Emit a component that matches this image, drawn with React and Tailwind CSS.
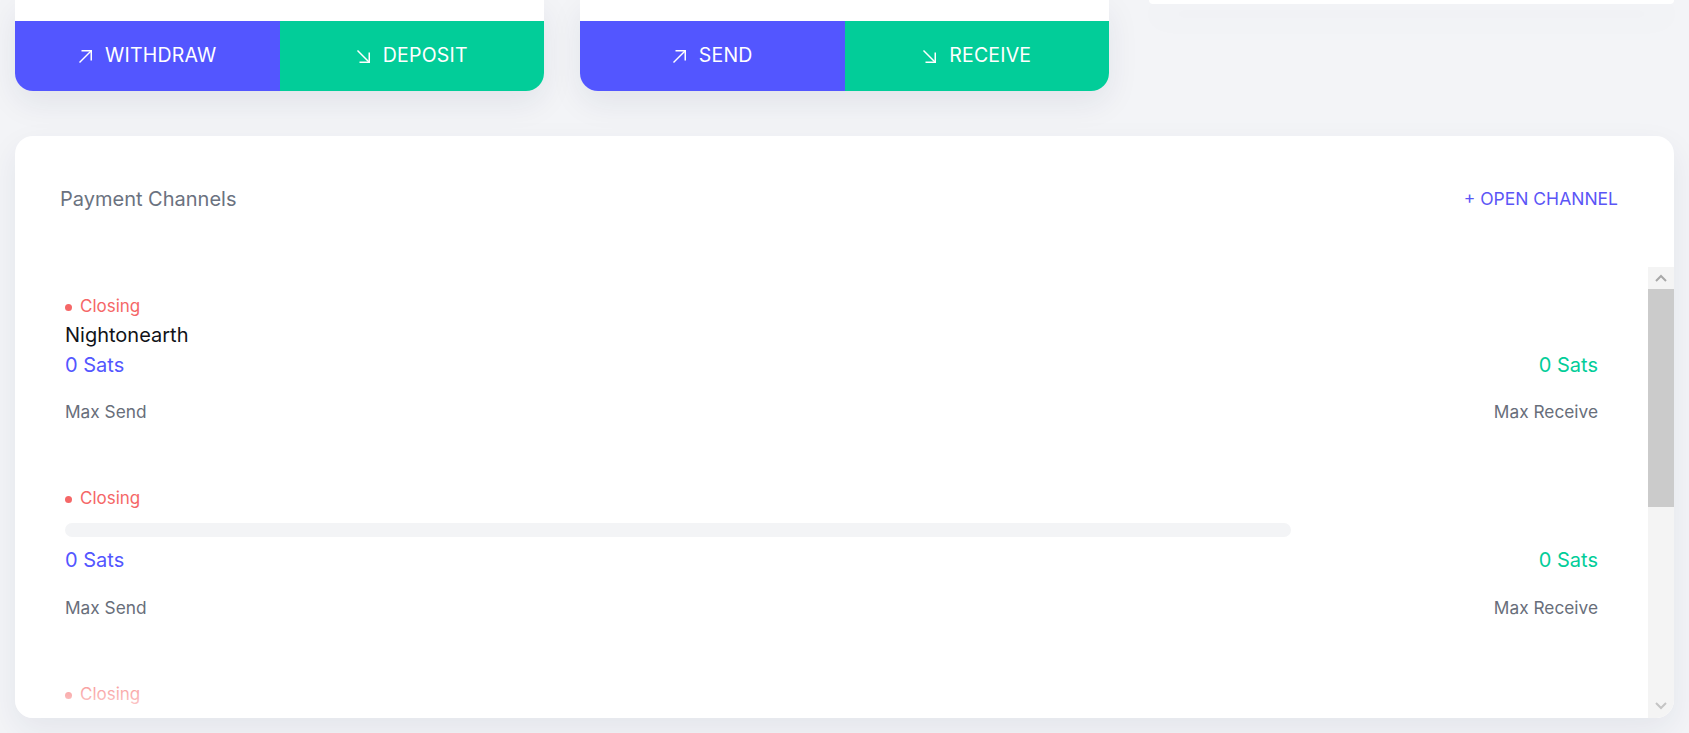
import React from 'react'

const UpRight = () => (
  <svg width="15" height="15" viewBox="0 0 15 15" fill="none" stroke="currentColor" strokeWidth="1.5">
    <path d="M1.5 13.5 13 2" />
    <path d="M3.5 1.75h9.75v9.75" />
  </svg>
)

const DownRight = () => (
  <svg width="15" height="15" viewBox="0 0 15 15" fill="none" stroke="currentColor" strokeWidth="1.5">
    <path d="M1.5 1.5 13 13" />
    <path d="M13.25 3.5v9.75H3.5" />
  </svg>
)

const ActionCard = ({ left, right }) => {
  return (
    <div className="overflow-hidden rounded-b-[18px] bg-white shadow-[0_12px_32px_rgba(30,41,80,0.08)]">
      <div className="h-[21px]" />
      <div className="flex h-[70px] text-white">
        <button className="flex flex-1 items-center justify-center gap-[12px] bg-[#5356ff] text-[19.5px] tracking-[0.01em]">
          <UpRight />
          {left}
        </button>
        <button className="flex flex-1 items-center justify-center gap-[12px] bg-[#02cd99] text-[19.5px] tracking-[0.01em]">
          <DownRight />
          {right}
        </button>
      </div>
    </div>
  )
}

const Channel = ({ name }) => {
  return (
    <div className="mb-[63px]">
      <div className="flex h-[24px] items-center gap-[8px] text-[17px] text-[#f56767]">
        <span className="h-[7px] w-[7px] rounded-full bg-[#f56767]" />
        Closing
      </div>
      {name ? (
        <p className="text-[20px] leading-[32px] text-[#111318]">{name}</p>
      ) : (
        <div className="mt-[12px] mb-[9px] h-[14px] w-[80%] rounded-full bg-[#f3f4f6]" />
      )}
      <div className="flex justify-between text-[20px] leading-[28px]">
        <span className="text-[#5356ff]">0 Sats</span>
        <span className="text-[#02cd99]">0 Sats</span>
      </div>
      <div className={`flex justify-between text-[17.3px] leading-[24px] text-[#686e7a] ${name ? 'mt-[21px]' : 'mt-[22px]'}`}>
        <span>Max Send</span>
        <span>Max Receive</span>
      </div>
    </div>
  )
}

export default function App() {
  return (
    <main className="h-[733px] overflow-hidden bg-[#f3f4f7] px-[15px] font-['Inter',sans-serif] antialiased">
      <div className="grid grid-cols-3 gap-x-[36px]">
        <ActionCard left="WITHDRAW" right="DEPOSIT" />
        <ActionCard left="SEND" right="RECEIVE" />
        <div className="ml-[4px] h-[4px] self-start rounded-b-[18px] bg-white shadow-[0_12px_32px_rgba(30,41,80,0.08)]" />
      </div>

      <section className="mt-[45px] flex h-[582px] flex-col overflow-hidden rounded-[18px] bg-white shadow-[0_12px_32px_rgba(30,41,80,0.07)]">
        <header className="flex h-[131px] shrink-0 items-start justify-between pt-[49px] pl-[45px] pr-[56px]">
          <h2 className="text-[20px] leading-[28px] text-[#6b7280]">Payment Channels</h2>
          <button className="text-[17.5px] leading-[28px] text-[#5b55f6]">+ OPEN CHANNEL</button>
        </header>

        <div className="flex min-h-0 flex-1">
          <div className="relative flex-1 overflow-hidden px-[50px] pt-[28px]">
            <Channel name="Nightonearth" />
            <Channel />
            <Channel />
            <div className="pointer-events-none absolute inset-x-0 bottom-0 h-[60px] bg-gradient-to-b from-white/0 to-white/80" />
          </div>

          {/* fake scrollbar */}
          <div className="flex w-[26px] flex-col bg-[#f4f4f4]">
            <div className="flex h-[22px] items-center justify-center">
              <svg width="12" height="8" viewBox="0 0 12 8">
                <path d="M1 7 6 2l5 5" fill="none" stroke="#a8a8a8" strokeWidth="2" />
              </svg>
            </div>
            <div className="h-[218px] bg-[#cbcbcb]" />
            <div className="flex-1" />
            <div className="flex h-[24px] items-center justify-center">
              <svg width="12" height="8" viewBox="0 0 12 8">
                <path d="M1 1l5 5 5-5" fill="none" stroke="#c4c4c4" strokeWidth="2" />
              </svg>
            </div>
          </div>
        </div>
      </section>
    </main>
  )
}
